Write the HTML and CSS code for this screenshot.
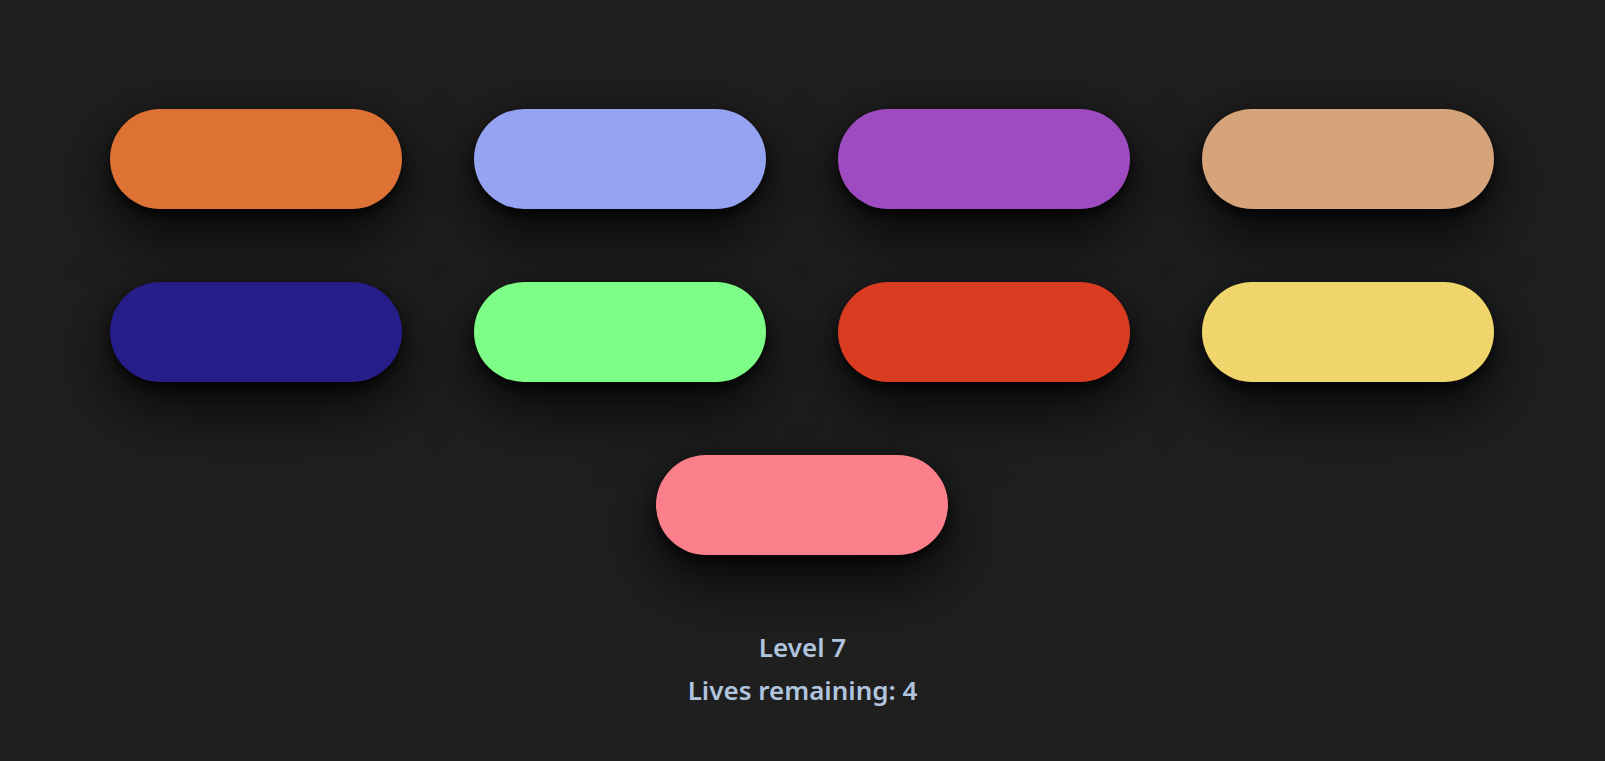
FILE: index.html
```html
<!DOCTYPE html>
<html lang="en">
<head>
<meta charset="utf-8">
<title>Pills</title>
<link rel="stylesheet" href="styles.css">
</head>
<body>
<main class="game">
  <div class="board">
    <div class="pill pill-orange"></div>
    <div class="pill pill-lavender"></div>
    <div class="pill pill-purple"></div>
    <div class="pill pill-tan"></div>
    <div class="pill pill-navy"></div>
    <div class="pill pill-green"></div>
    <div class="pill pill-red"></div>
    <div class="pill pill-yellow"></div>
    <div class="pill pill-pink"></div>
  </div>
  <div class="info">
    <p class="info-line">Level 7</p>
    <p class="info-line">Lives remaining: 4</p>
  </div>
</main>
</body>
</html>
```

FILE: styles.css
```css
html, body {
  margin: 0;
  padding: 0;
  background: #1f1f1f;
}

.game {
  padding-top: 109px;
  display: flex;
  flex-direction: column;
  align-items: center;
}

.board {
  width: 1385px;
  margin-right: 2px;
  display: flex;
  flex-wrap: wrap;
  justify-content: center;
  gap: 73px 72px;
}

.pill {
  width: 292px;
  height: 100px;
  border-radius: 50px;
  box-shadow: 0 6px 12px rgba(0, 0, 0, 0.7), 0 24px 64px rgba(0, 0, 0, 0.8);
}

.pill-orange { background: #dd7234; }
.pill-lavender { background: #96a3f3; }
.pill-purple { background: #9e4bc1; }
.pill-tan { background: #d6a47b; }
.pill-navy { background: #251d89; }
.pill-green { background: #7dfe86; }
.pill-red { background: #da3c22; }
.pill-yellow { background: #f0d46c; }
.pill-pink { background: #fb808b; }

.info {
  margin-top: 71px;
  text-align: center;
  font-family: "Noto Sans", "Open Sans", sans-serif;
  font-weight: 600;
  font-size: 26px;
  color: #b0c4de;
}

.info-line {
  margin: 0;
  line-height: 43px;
}
```
